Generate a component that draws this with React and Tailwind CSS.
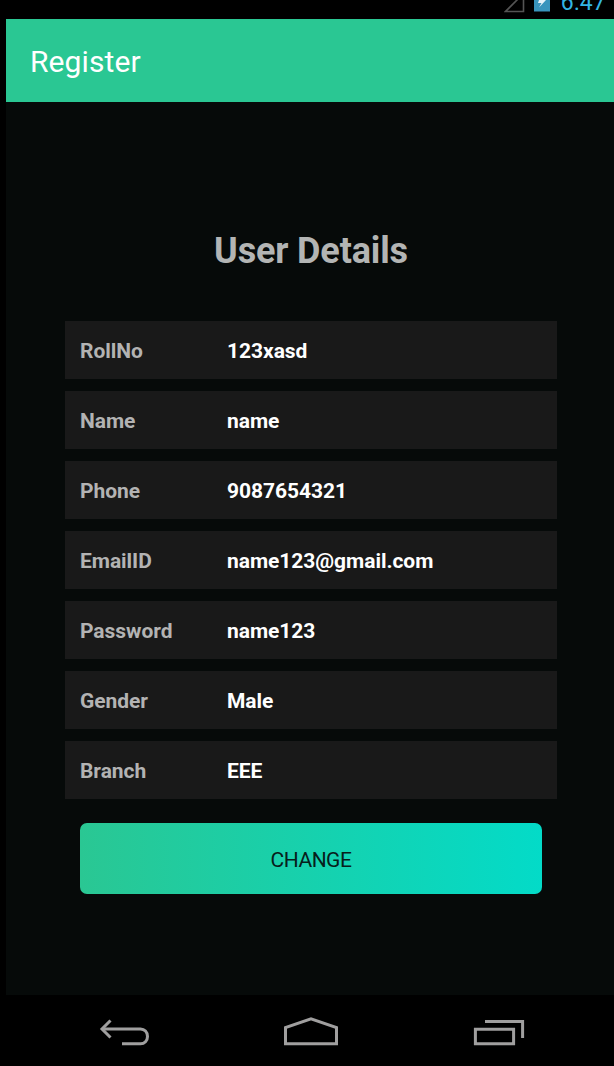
const details = [
  ["RollNo", "123xasd"],
  ["Name", "name"],
  ["Phone", "9087654321"],
  ["EmailID", "name123@gmail.com"],
  ["Password", "name123"],
  ["Gender", "Male"],
  ["Branch", "EEE"],
];

function StatusBar() {
  return (
    <div className="flex h-[19px] items-end justify-end overflow-hidden pr-[8px]">
      <svg className="mr-2 h-[19px] w-[22px] shrink-0" viewBox="0 0 22 19" fill="none">
        <path d="M1.500 11.500H19.500V-6.500Z" stroke="#545454" strokeWidth="1.6" />
      </svg>
      <svg className="mr-[11px] h-[19px] w-[16px] shrink-0" viewBox="0 0 16 19">
        <path d="M0 0H16V11.5H0Z" fill="#3995bd" />
        <path d="M5 0H12L5 7.500L7.500 3H4Z" fill="#e8f4fa" />
      </svg>
      <span className="mb-[3px] text-[23px] leading-[27px] tracking-[0.2px] text-[#33b5e5]">6:47</span>
    </div>
  );
}

function NavBar() {
  return (
    <nav className="h-[71px]">
      <svg className="h-[71px] w-[614px]" viewBox="0 995 614 71" fill="none" stroke="#a09f9f" strokeWidth="3">
        <path d="M103 1029H140.500C144.500 1029 147.500 1032.100 147.500 1036.400C147.500 1040.700 144.500 1043.800 140.500 1043.800H122" />
        <path d="M110.500 1020.500L102 1029L110.500 1037.500" />
        <path d="M285.500 1043.700V1027.500L311 1018.800L336.500 1027.500V1043.700Z" />
        <path d="M475.400 1029.200H513.600V1043.800H475.400Z" />
        <path d="M485 1021.600H522.600V1038" />
      </svg>
    </nav>
  );
}

export default function App() {
  return (
    <div className="flex h-[1066px] w-[614px] flex-col overflow-hidden bg-black font-['Roboto',sans-serif]">
      <StatusBar />
      <header className="ml-[6px] flex h-[83px] items-center bg-[#2ac793] pl-6 pt-[3px]">
        <h1 className="text-[30px] leading-[36px] tracking-[0.1px] text-white">Register</h1>
      </header>
      <main className="ml-[6px] flex h-[893px] flex-col bg-[#060a09] pl-[59px] pr-[57px]">
        <h2 className="mt-[128px] text-center text-[36px] font-bold leading-[42px] tracking-[-0.15px] text-[#b3b5b4]">User Details</h2>
        <dl className="mt-[49px] flex flex-col gap-3">
          {details.map(([label, value]) => (
            <div key={label} className="flex h-[58px] items-center bg-[#191919] pl-[15px] pt-[4px] text-[21px] font-bold tracking-[-0.05px]">
              <dt className="w-[147px] text-[#b3b3b3]">{label}</dt>
              <dd className="text-white">{value}</dd>
            </div>
          ))}
        </dl>
        <button className="mx-[15px] mt-6 h-[71px] rounded-[7px] bg-linear-to-r/srgb from-[#2ac793] to-[#03dbc8] pt-[4px] text-[21px] tracking-[-0.5px] text-[#07201b]">
          CHANGE
        </button>
      </main>
      <NavBar />
    </div>
  );
}
